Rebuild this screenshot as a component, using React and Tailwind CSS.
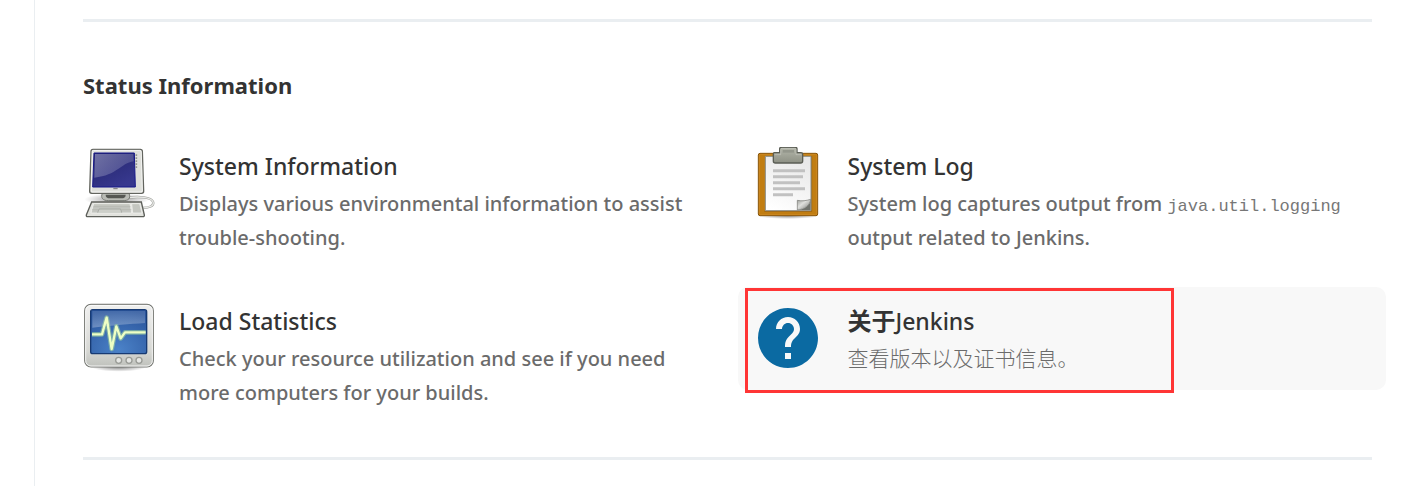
import React from "react";

const MonitorIcon = () => (
  <svg viewBox="24 21 216 216" className="h-18 w-18 shrink-0" aria-hidden="true">
    <defs>
      <linearGradient id="screen" x1="0" y1="0" x2="0.6" y2="1">
        <stop offset="0" stopColor="#23246a" />
        <stop offset="1" stopColor="#37388e" />
      </linearGradient>
      <linearGradient id="gloss" x1="0" y1="0" x2="1" y2="0.6">
        <stop offset="0" stopColor="#8a8cb8" stopOpacity="0.75" />
        <stop offset="1" stopColor="#8a8cb8" stopOpacity="0.3" />
      </linearGradient>
      <radialGradient id="monitorShadow">
        <stop offset="0" stopColor="#000" stopOpacity="0.4" />
        <stop offset="1" stopColor="#000" stopOpacity="0" />
      </radialGradient>
    </defs>
    <ellipse cx="126" cy="178" rx="98" ry="18" fill="url(#monitorShadow)" />
    <path d="M160 173c30-4 68-2 74 12 5 14-14 18-30 19" fill="none" stroke="#9c9d99" strokeWidth="7" />
    <path d="M160 173c30-4 68-2 74 12 5 14-14 18-30 19" fill="none" stroke="#e8e9e6" strokeWidth="4" />
    <path d="M82 160h80c6 16-2 22-18 22h-44c-16 0-24-8-18-22z" fill="#b9bbb5" stroke="#767973" strokeWidth="3" />
    <path d="M92 164h60c0 8-4 11-14 11h-32c-10 0-14-3-14-11z" fill="#555752" />
    <path d="M54 28h142q6 0 6 6l4 120q0 6-6 6H50q-6 0-6-6l4-120q0-6 6-6z" fill="#dfe0db" stroke="#63655f" strokeWidth="4" />
    <path d="M55 31h139q4 0 5 5l3 116q0 4-4 4H53q-4 0-4-4l3-117q0-4 3-4z" fill="none" stroke="#fff" strokeWidth="2" />
    <path d="M57 39h121l3 102H53z" fill="url(#screen)" stroke="#17188a" strokeWidth="3" />
    <path d="M60 42h115l1 22c-40 6-48 42-118 49z" fill="url(#gloss)" />
    <path d="M184 43v42" stroke="#93958f" strokeWidth="5" strokeDasharray="5 4" />
    <path d="M115 146h13" stroke="#777" strokeWidth="3" />
    <path d="M50 186h149l9 39q1 5-5 5H38q-5 0-4-5z" fill="#e1e2dd" stroke="#5d5f5a" strokeWidth="4" />
    <path d="M56 191h109l5 28H48z" fill="#c4c6c0" stroke="#f6f6f4" strokeWidth="2" />
    <path d="M170 191h24l7 28h-28z" fill="#c4c6c0" stroke="#f6f6f4" strokeWidth="2" />
    <path d="M55 200h112M51 209h18m71 0h29" stroke="#adafa9" strokeWidth="1.5" />
    <path d="M68 218l4-11h65l3 11" fill="#cdcfc9" stroke="#999b95" strokeWidth="2" />
  </svg>
);

const ClipboardIcon = () => (
  <svg viewBox="21 21 216 216" className="h-18 w-18 shrink-0" aria-hidden="true">
    <defs>
      <linearGradient id="paper" x1="0.6" y1="0" x2="0.2" y2="1">
        <stop offset="0" stopColor="#e9e9e9" />
        <stop offset="1" stopColor="#fff" />
      </linearGradient>
      <linearGradient id="clip" x1="0" y1="0" x2="0" y2="1">
        <stop offset="0" stopColor="#b5b8ab" />
        <stop offset="1" stopColor="#8d9084" />
      </linearGradient>
      <linearGradient id="fold" x1="0" y1="0" x2="1" y2="1">
        <stop offset="0" stopColor="#9b9d98" />
        <stop offset="0.4" stopColor="#dfe0dd" />
        <stop offset="1" stopColor="#777974" />
      </linearGradient>
      <radialGradient id="clipShadow">
        <stop offset="0" stopColor="#000" stopOpacity="0.4" />
        <stop offset="1" stopColor="#000" stopOpacity="0" />
      </radialGradient>
    </defs>
    <ellipse cx="129" cy="228" rx="92" ry="9" fill="url(#clipShadow)" />
    <rect x="40" y="40" width="178" height="187" rx="5" fill="#c17d11" stroke="#85540a" strokeWidth="3" />
    <rect x="43" y="43" width="172" height="181" rx="3" fill="none" stroke="#d08c28" strokeWidth="2" />
    <path d="M200 48v166H58" fill="none" stroke="#85540a" strokeOpacity="0.6" strokeWidth="3" />
    <path d="M61 49h137v163H61z" fill="url(#paper)" stroke="#8b8d88" strokeWidth="3" />
    <path d="M84 92h96M84 110h90M84 128h81M84 146h96M84 164h60" stroke="#c1c1c1" strokeWidth="9" />
    <path d="M157 210v-29c14 3 27 1 40-3-2 18-19 30-40 32z" fill="url(#fold)" stroke="#747671" strokeWidth="2" />
    <path d="M158 210c21-2 37-14 39-31v31z" fill="#6f726c" />
    <path d="M88 38h16V26q0-4 5-4h42q5 0 5 4v12h12q5 0 5 5v20q0 6-6 6H91q-6 0-6-6V43q0-5 3-5z" fill="url(#clip)" stroke="#5b5e55" strokeWidth="4" />
    <path d="M89 44h18V28q0-3 4-3h38q4 0 4 3v16h16" fill="none" stroke="#c4c6bc" strokeWidth="2" />
    <path d="M113 30h34v8h-34z" fill="#94978c" />
  </svg>
);

const LoadIcon = () => (
  <svg viewBox="24 21 216 216" className="h-18 w-18 shrink-0" aria-hidden="true">
    <defs>
      <linearGradient id="casing" x1="0" y1="0" x2="0" y2="1">
        <stop offset="0" stopColor="#f0f0ef" />
        <stop offset="0.75" stopColor="#d6d7d3" />
        <stop offset="1" stopColor="#bfc1bc" />
      </linearGradient>
      <radialGradient id="tube" cx="0.5" cy="0.9" r="0.9">
        <stop offset="0" stopColor="#4b82c8" />
        <stop offset="1" stopColor="#2a559c" />
      </radialGradient>
      <linearGradient id="tubeGloss" x1="0" y1="0" x2="0" y2="1">
        <stop offset="0" stopColor="#fff" stopOpacity="0.12" />
        <stop offset="1" stopColor="#fff" stopOpacity="0.28" />
      </linearGradient>
      <radialGradient id="loadShadow">
        <stop offset="0" stopColor="#000" stopOpacity="0.5" />
        <stop offset="1" stopColor="#000" stopOpacity="0" />
      </radialGradient>
    </defs>
    <ellipse cx="131" cy="215" rx="84" ry="15" fill="url(#loadShadow)" />
    <rect x="29" y="28" width="206" height="188" rx="19" fill="url(#casing)" stroke="#777974" strokeWidth="3.5" />
    <rect x="32" y="31" width="200" height="182" rx="16" fill="none" stroke="#fff" strokeWidth="2.5" />
    <rect x="47" y="44" width="168" height="132" rx="6" fill="url(#tube)" stroke="#173a73" strokeWidth="4" />
    <path d="M52 48h158v36c-50 3-90 7-158 14z" fill="url(#tubeGloss)" />
    <path d="M51 118h30l14-50 15 94 14-68 13 36 13-18h62" fill="none" stroke="#a6d89a" strokeOpacity="0.55" strokeWidth="14" strokeLinejoin="round" />
    <path d="M51 118h30l14-50 15 94 14-68 13 36 13-18h62" fill="none" stroke="#eeffc4" strokeWidth="7" strokeLinejoin="round" />
    {[131, 162, 192].map((cx) => (
      <circle key={cx} cx={cx} cy="196" r="9" fill="#e6e7e4" stroke="#999b96" strokeWidth="4" />
    ))}
  </svg>
);

const HelpIcon = () => (
  <svg viewBox="0 0 24 24" className="h-18 w-18 shrink-0" aria-hidden="true">
    <path
      fill="#0b6aa2"
      d="M12 2C6.48 2 2 6.48 2 12s4.48 10 10 10 10-4.48 10-10S17.52 2 12 2zm1 17h-2v-2h2v2zm2.07-7.75l-.9.92C13.45 12.9 13 13.5 13 15h-2v-.5c0-1.1.45-2.1 1.17-2.83l1.24-1.26c.37-.36.59-.86.59-1.41 0-1.1-.9-2-2-2s-2 .9-2 2H8c0-2.21 1.79-4 4-4s4 1.79 4 4c0 .88-.36 1.68-.93 2.25z"
    />
  </svg>
);

const items = [
  {
    key: "systemInfo",
    icon: <MonitorIcon />,
    title: "System Information",
    text: "Displays various environmental information to assist trouble-shooting.",
  },
  {
    key: "log",
    icon: <ClipboardIcon />,
    title: "System Log",
    text: (
      <>
        System log captures output from{" "}
        <code className="font-['Liberation_Mono',monospace] text-[17px] leading-none text-[#777]">java.util.logging</code>{" "}
        output related to Jenkins.
      </>
    ),
  },
  {
    key: "load-statistics",
    icon: <LoadIcon />,
    title: "Load Statistics",
    text: "Check your resource utilization and see if you need more computers for your builds.",
  },
  {
    key: "about",
    icon: <HelpIcon />,
    title: (
      <>
        <span className="text-[24px] leading-none font-bold">关于</span>Jenkins
      </>
    ),
    text: <span className="text-[21px] leading-none font-light">查看版本以及证书信息。</span>,
    active: true,
  },
];

const ManageItem = ({ item }) => (
  <a
    href={`#${item.key}`}
    className={`relative flex items-start gap-6 rounded-[10px] px-3.5 pt-[15px] pb-3.5 ${item.active ? "bg-[#f8f8f8]" : ""}`}
  >
    {item.icon}
    <dl className="min-w-0 flex-1">
      <dt className="text-[23px] leading-[38px] font-medium text-[#333]">{item.title}</dt>
      <dd className="mt-0.5 text-[20px] leading-[34px] font-medium text-[#6b6b6b]">{item.text}</dd>
    </dl>
    {item.active && (
      <span className="absolute top-px left-[7px] h-[105px] w-[429px] border-3 border-[#ff3535]" />
    )}
  </a>
);

const App = () => {
  return (
    <div className="flex min-h-screen bg-white font-['Noto_Sans','Noto_Sans_CJK_SC',sans-serif]">
      <div className="w-[35px] shrink-0 border-r border-[#eaeef1]" />
      <main className="flex-1 pt-[19px] pr-[37px] pl-12">
        <hr className="border-t-3 border-[#eaeef1]" />
        <section className="pt-11 pb-[33px]">
          <h2 className="text-[22px] leading-[38px] font-bold text-[#333]">Status Information</h2>
          <div className="-mx-3.5 mt-7 grid grid-cols-2 items-start gap-x-5 gap-y-[18px]">
            {items.map((item) => (
              <ManageItem key={item.key} item={item} />
            ))}
          </div>
        </section>
        <hr className="border-t-3 border-[#eaeef1]" />
      </main>
    </div>
  );
};

export default App;
